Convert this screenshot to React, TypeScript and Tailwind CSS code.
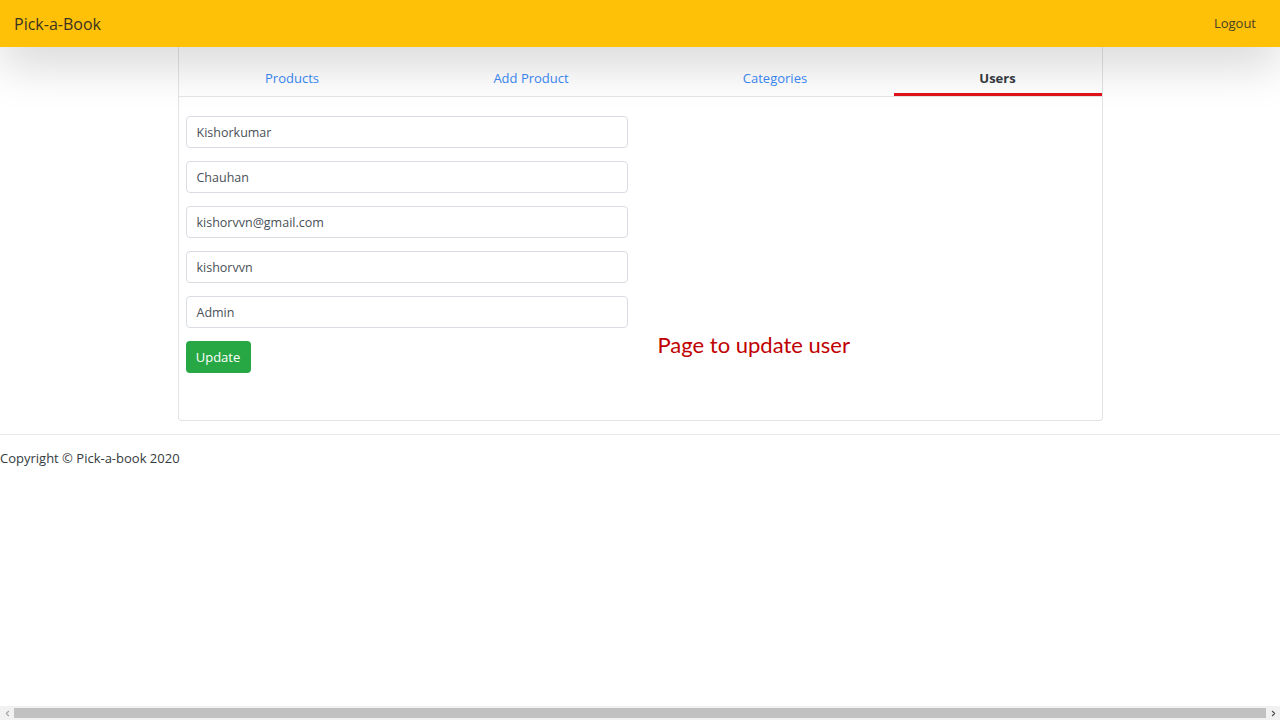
import { ChevronLeft, ChevronRight } from "lucide-react";

const tabs = [
  { label: "Products", width: "w-[227px]" },
  { label: "Add Product", width: "w-[251px]" },
  { label: "Categories", width: "w-[237px]" },
  { label: "Users", width: "w-[208px]", active: true },
];

const fields = ["Kishorkumar", "Chauhan", "kishorvvn@gmail.com", "kishorvvn", "Admin"];

export default function App() {
  return (
    <div className="flex h-screen flex-col overflow-hidden bg-white font-['Open_Sans',sans-serif] text-[#212529]">
      <div className="flex-1">
        {/* Navbar */}
        <nav className="relative z-10 flex h-[47px] items-center justify-between bg-[#ffc107] pl-[14px] pr-[24px] shadow-[0_16px_48px_rgba(0,0,0,0.175)]">
          <span className="text-[16px] text-[#3a3322]">Pick-a-Book</span>
          <span className="text-[13px] text-[#4a4028]">Logout</span>
        </nav>

        {/* Card */}
        <div className="mx-auto w-[925px] rounded-b-[4px] border border-t-0 border-[#e3e3e3] pb-[47px]">
          {/* Tabs */}
          <div className="flex h-[50px] border-b border-[#e6e6e6]">
            {tabs.map((t) => (
              <div
                key={t.label}
                className={`${t.width} flex items-end justify-center leading-[17px] ${
                  t.active
                    ? "border-b-[3px] border-[#e0141b] pb-[6px] text-[13px] font-bold text-[#343a40]"
                    : "pb-[9px] text-[13px] text-[#3b8af7]"
                }`}
              >
                {t.label}
              </div>
            ))}
          </div>

          {/* Body */}
          <div className="flex px-[7px] pt-[19px]">
            <div className="flex w-[442px] flex-col gap-[13px]">
              {fields.map((f) => (
                <div
                  key={f}
                  className="flex h-[32px] items-center rounded-[4px] border border-[#d9dde3] px-[10px] pt-[2px] text-[12.5px] text-[#495057]"
                >
                  {f}
                </div>
              ))}
              <div>
                <button className="h-[32px] w-[65px] rounded-[4px] bg-[#28a745] pt-[1px] text-[13px] text-white">
                  Update
                </button>
              </div>
            </div>
            <div className="pl-[30px] pt-[218px]">
              <span className="font-['Lato',sans-serif] text-[22px] leading-none text-[#c00000]">
                Page to update user
              </span>
            </div>
          </div>
        </div>

        {/* Footer */}
        <footer className="mt-[13px] border-t border-[#e9e9e9] pt-[14px]">
          <p className="text-[13px] text-[#343a40]">Copyright © Pick-a-book 2020</p>
        </footer>
      </div>

      {/* Horizontal scrollbar */}
      <div className="flex h-[14px] items-center bg-[#f1f1f1]">
        <div className="flex w-[14px] justify-center text-[#a3a3a3]">
          <ChevronLeft size={9} strokeWidth={3} />
        </div>
        <div className="h-[10px] flex-1 bg-[#c1c1c1]" />
        <div className="flex w-[14px] justify-center text-[#505050]">
          <ChevronRight size={9} strokeWidth={3} />
        </div>
      </div>
    </div>
  );
}
